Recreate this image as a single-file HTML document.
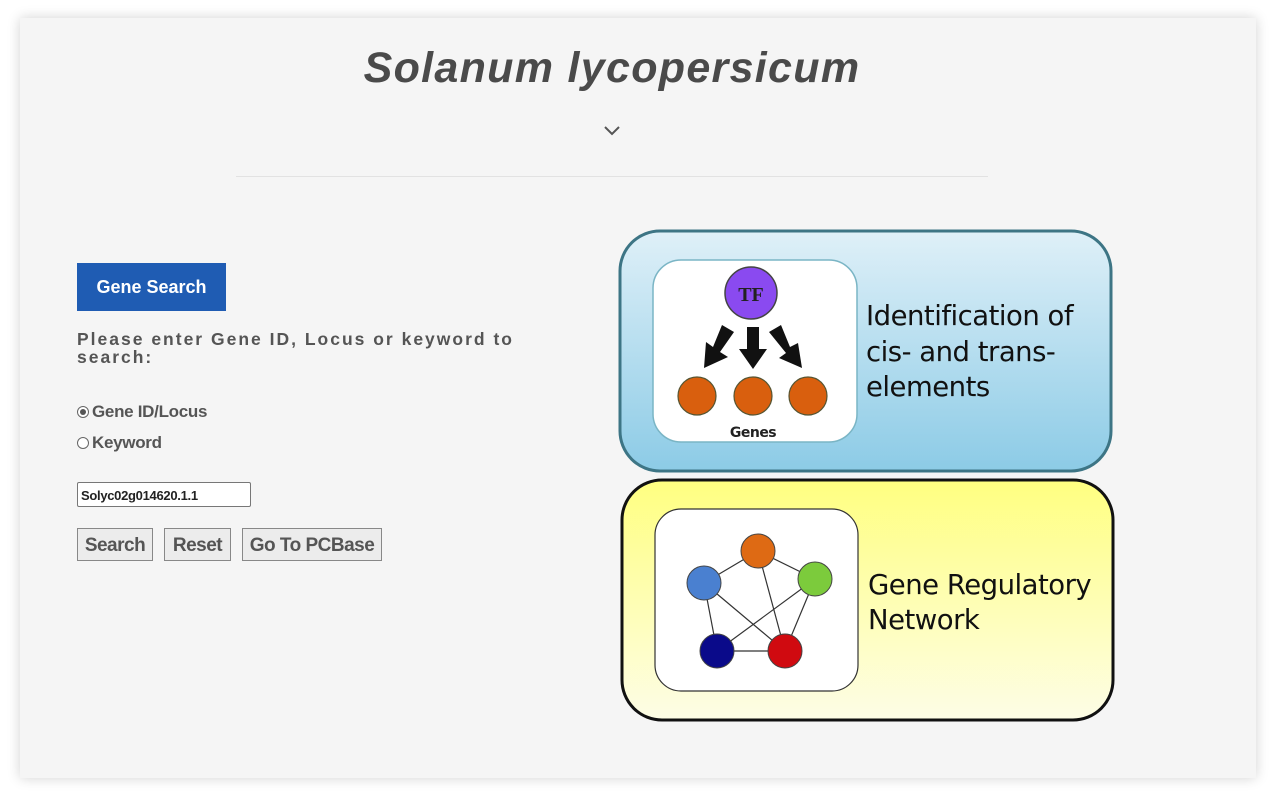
<!DOCTYPE html>
<html><head><style>
html,body{margin:0;padding:0;background:#fff;width:1276px;height:799px;overflow:hidden;font-family:"Liberation Sans",sans-serif}
.card{position:absolute;left:20px;top:18px;width:1236px;height:760px;background:#f5f5f5;box-shadow:0 0 12px rgba(0,0,0,.18)}
h1{position:absolute;left:0;top:26px;width:1184px;margin:0;text-align:center;font-style:italic;font-weight:bold;font-size:43px;color:#4a4a4a;letter-spacing:1.3px}
.hr{position:absolute;left:216px;top:158px;width:752px;height:1px;background:#e2e2e2}
.btn{position:absolute;left:57px;top:245px;width:149px;height:48px;background:#1f5cb3;color:#fff;font-weight:bold;font-size:18px;line-height:48px;text-align:center}
.lbl{position:absolute;left:57px;top:312px;width:480px;font-weight:bold;font-size:17.5px;line-height:18px;color:#555;letter-spacing:2px}
.r{position:absolute;left:57px;font-size:17px;color:#555;font-weight:bold;letter-spacing:-0.3px}
.rad{display:inline-block;width:10px;height:10px;border:1px solid #666;border-radius:50%;vertical-align:-1px;margin-right:3px;background:#fff;position:relative}
.rad.on::after{content:"";position:absolute;left:2px;top:2px;width:6px;height:6px;border-radius:50%;background:#555}
.inp{position:absolute;left:57px;top:464px;width:174px;height:25px;border:1px solid #777;background:#fff;font-size:13px;line-height:25px;padding-left:3px;box-sizing:border-box;border-radius:2px;color:#222;font-weight:bold;letter-spacing:-0.3px}
.b{position:absolute;top:510px;height:33px;border:1px solid #888;background:#ececec;font-size:19px;font-weight:bold;color:#555;line-height:33px;text-align:center;box-sizing:border-box;letter-spacing:-0.5px}
</style></head><body>
<div class="card">
<h1>Solanum lycopersicum</h1>
<svg style="position:absolute;left:583px;top:106px" width="18" height="12"><path d="M2 3 L9 10 L16 3" stroke="#555" stroke-width="2" fill="none"/></svg>
<div class="hr"></div>
<div class="btn">Gene Search</div>
<div class="lbl">Please enter Gene ID, Locus or keyword to<br>search:</div>
<div class="r" style="top:384px"><span class="rad on"></span>Gene ID/Locus</div>
<div class="r" style="top:415px"><span class="rad"></span>Keyword</div>
<div class="inp">Solyc02g014620.1.1</div>
<div class="b" style="left:57px;width:76px">Search</div>
<div class="b" style="left:144px;width:67px">Reset</div>
<div class="b" style="left:222px;width:140px">Go To PCBase</div>
</div>
<svg style="position:absolute;left:0;top:0" width="1276" height="799">
<defs>
<linearGradient id="bl" x1="0" y1="0" x2="0" y2="1"><stop offset="0" stop-color="#dff0f8"/><stop offset="1" stop-color="#8ccbe6"/></linearGradient>
<linearGradient id="ye" x1="0" y1="0" x2="0" y2="1"><stop offset="0" stop-color="#ffff80"/><stop offset="1" stop-color="#fdfde6"/></linearGradient>
</defs>
<rect x="620" y="231" width="491" height="240" rx="40" fill="url(#bl)" stroke="#3d7585" stroke-width="3"/>
<rect x="653" y="260" width="204" height="182" rx="28" fill="#fff" stroke="#7ab5c5" stroke-width="1.5"/>
<circle cx="751" cy="293" r="26" fill="#8a4af0" stroke="#444" stroke-width="1.5"/>
<text x="751" y="301" text-anchor="middle" font-family="Liberation Serif,serif" font-weight="bold" font-size="20" fill="#222">TF</text>
<path d="M722 325 L734 332 L720 352 L728 357 L704 368 L706 342 L713 347 Z" fill="#111"/>
<path d="M747 327 L759 327 L759 349 L767 349 L753 369 L739 349 L747 349 Z" fill="#111"/>
<path d="M769 332 L781 325 L790 347 L798 343 L802 368 L779 358 L786 353 Z" fill="#111"/>
<g fill="#d95f0e" stroke="#553" stroke-width="1.2">
<circle cx="697" cy="396" r="19"/><circle cx="753" cy="396" r="19"/><circle cx="808" cy="396" r="19"/></g>
<text x="753" y="437" text-anchor="middle" font-family="DejaVu Sans,sans-serif" font-size="14" font-weight="bold" fill="#222" letter-spacing="-0.5">Genes</text>
<g font-family="DejaVu Sans,sans-serif" font-size="27.5" fill="#111" letter-spacing="-0.5">
<text x="866" y="325">Identification of</text>
<text x="866" y="361">cis- and trans-</text>
<text x="866" y="396">elements</text>
</g>
<rect x="622" y="480" width="491" height="240" rx="40" fill="url(#ye)" stroke="#111" stroke-width="3"/>
<rect x="655" y="509" width="203" height="182" rx="26" fill="#fff" stroke="#333" stroke-width="1.2"/>
<g stroke="#333" stroke-width="1.2">
<line x1="758" y1="551" x2="704" y2="583"/><line x1="758" y1="551" x2="815" y2="579"/><line x1="758" y1="551" x2="785" y2="651"/>
<line x1="704" y1="583" x2="717" y2="651"/><line x1="704" y1="583" x2="785" y2="651"/><line x1="815" y1="579" x2="717" y2="651"/>
<line x1="815" y1="579" x2="785" y2="651"/><line x1="717" y1="651" x2="785" y2="651"/></g>
<g stroke="#444" stroke-width="1">
<circle cx="758" cy="551" r="17" fill="#de6a14"/><circle cx="704" cy="583" r="17" fill="#4a80d0"/>
<circle cx="815" cy="579" r="17" fill="#7ccb3c"/><circle cx="717" cy="651" r="17" fill="#0a0a8a"/>
<circle cx="785" cy="651" r="17" fill="#d00a10"/></g>
<g font-family="DejaVu Sans,sans-serif" font-size="27.5" fill="#111" letter-spacing="-0.5">
<text x="868" y="594">Gene Regulatory</text>
<text x="868" y="629">Network</text>
</g>
</svg>
</body></html>
